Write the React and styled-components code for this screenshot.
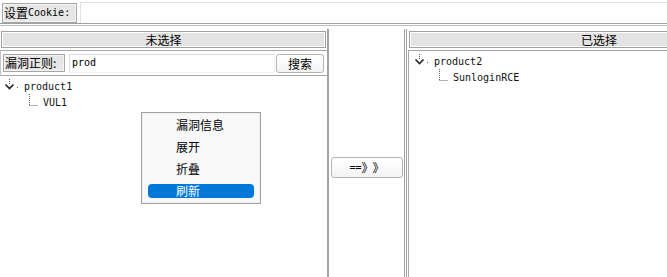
import React from 'react';
import styled, { createGlobalStyle } from 'styled-components';

const GlobalStyle = createGlobalStyle`
  html, body {
    margin: 0;
    padding: 0;
    background: #fff;
  }
  body {
    font-family: "DejaVu Sans Mono", "Noto Sans CJK SC", monospace;
    font-size: 10px;
    color: #000;
  }
`;

const Window = styled.div`
  position: relative;
  width: 667px;
  height: 277px;
  overflow: hidden;
  display: flex;
  flex-direction: column;
  background: #fff;
`;

const Cjk = styled.span`
  font-family: "Noto Sans CJK SC", sans-serif;
  font-size: 12px;
  letter-spacing: ${(p) => p.$spacing || 0}px;
`;

const TopBar = styled.div`
  display: flex;
  align-items: flex-start;
  height: 23px;
  padding-left: 2px;
`;

const FieldLabel = styled.div`
  box-sizing: border-box;
  display: flex;
  align-items: center;
  height: ${(p) => p.$h || 20}px;
  width: ${(p) => p.$w}px;
  margin-top: ${(p) => p.$top || 0}px;
  padding-left: 1px;
  background: #e6e6e6;
  border: 1px solid #a6a6a6;
  box-shadow: inset 0 0 0 1px #f4f4f4;
  white-space: nowrap;
  line-height: 16px;
`;

const CookieInput = styled.div`
  flex: 1;
  height: 21px;
  margin: 2px 0 0 3px;
  border-top: 1px solid #e2e2e2;
  border-left: 1px solid #e2e2e2;
  background: #fff;
`;

const Separator = styled.div`
  height: 1px;
  border-top: 1px solid #a0a0a0;
  border-bottom: 1px solid #bdbdbd;
`;

const Main = styled.div`
  display: flex;
  flex: 1;
  min-height: 0;
  padding-top: 3px;
`;

const SidePanel = styled.div`
  flex: 0 0 ${(p) => p.$w}px;
  display: flex;
  flex-direction: column;
  box-sizing: border-box;
  border-right: ${(p) => (p.$edge ? '2px solid #a3a3a3' : 'none')};
`;

const MiddlePanel = styled.div`
  flex: 0 0 78px;
  box-sizing: border-box;
  display: flex;
  align-items: center;
  justify-content: center;
  padding: 28px 0 0 1px;
  border-right: 3px double #a0a0a0;
  margin-right: 1px;
`;

const PanelHeader = styled.div`
  height: 15px;
  margin: 2px 1px 0;
  border: 1px solid #a0a0a0;
  box-shadow: inset 0 0 0 1px #fff;
  background: #e3e3e3;
  text-align: center;
  line-height: 15px;
  font-family: "Noto Sans CJK SC", sans-serif;
  font-size: 12px;
`;

const SearchRow = styled.div`
  display: flex;
  align-items: center;
  height: 24px;
  margin-top: 2px;
  padding: 0 3px 0 2px;
  border-top: 1px solid #a8a8a8;
  border-bottom: 1px solid #a8a8a8;
  border-left: 1px solid #c4c4c4;
`;

const SearchInput = styled.div`
  flex: 1;
  height: 17px;
  margin: 0 1px 0 4px;
  padding-left: 2px;
  border: 1px solid #d9d9d9;
  border-right-color: #f0f0f0;
  border-bottom-color: #f0f0f0;
  background: #fff;
  line-height: 16px;
  font-size: 10px;
`;

const Button = styled.div`
  box-sizing: border-box;
  width: ${(p) => p.$w}px;
  height: ${(p) => p.$h}px;
  display: flex;
  align-items: center;
  justify-content: center;
  padding-left: ${(p) => p.$shift || 0}px;
  border: 1px solid #b4b4b4;
  border-radius: 3px;
  background: linear-gradient(#ffffff, #f3f3f3);
  white-space: nowrap;
`;

const Tree = styled.div`
  flex: 1;
  padding: ${(p) => p.$pt || 1}px 0 0 ${(p) => p.$pl || 4}px;
  border-top: ${(p) => (p.$bordered ? '1px solid #a8a8a8' : 'none')};
  border-left: ${(p) => (p.$bordered ? '1px solid #a8a8a8' : 'none')};
  margin-top: ${(p) => (p.$bordered ? 2 : 0)}px;
`;

const TreeRow = styled.div`
  display: flex;
  align-items: center;
  height: 16px;
  padding-left: ${(p) => p.$indent || 0}px;
  white-space: nowrap;
`;

const NodeText = styled.span`
  margin-left: ${(p) => p.$gap || 0}px;
  font-size: 10px;
  color: #111;
`;

const Menu = styled.div`
  position: absolute;
  left: 141px;
  top: 112px;
  width: 118px;
  display: flex;
  flex-direction: column;
  padding: 1px 0;
  background: #f8f8f8;
  border: 1px solid #a0a0a0;
  box-shadow: inset 0 0 0 1px #f0f0f0;
`;

const MenuItem = styled.div`
  height: 14px;
  margin: 4px 6px;
  padding-left: 28px;
  line-height: 14px;
  border-radius: 4px;
  font-family: "Noto Sans CJK SC", sans-serif;
  font-size: 12px;
  color: ${(p) => (p.$active ? '#fff' : '#000')};
  background: ${(p) => (p.$active ? '#0078d7' : 'transparent')};
`;

const Expander = () => (
  <svg width="20" height="14" viewBox="0 0 20 14">
    <line x1="5.5" y1="0" x2="5.5" y2="5" stroke="#555" strokeWidth="1" strokeDasharray="1 1" />
    <polyline points="1.5,5.5 5.5,9.5 9.5,5.5" fill="none" stroke="#222" strokeWidth="1.6" />
    <rect x="13" y="8" width="1" height="1" fill="#666" />
  </svg>
);

const Connector = () => (
  <svg width="12" height="16" viewBox="0 0 12 16">
    <line x1="1.5" y1="0" x2="1.5" y2="11" stroke="#666" strokeWidth="1" strokeDasharray="1 1" />
    <line x1="1.5" y1="11.5" x2="10" y2="11.5" stroke="#666" strokeWidth="1" strokeDasharray="1 1" />
  </svg>
);

const menuItems = ['漏洞信息', '展开', '折叠', '刷新'];

const App = () => {
  return (
    <>
      <GlobalStyle />
      <Window>
        <TopBar>
          <FieldLabel $w={75} $top={3}>
            <Cjk>设置</Cjk>Cookie:
          </FieldLabel>
          <CookieInput />
        </TopBar>
        <Separator />

        <Main>
          <SidePanel $w={329} $edge>
            <PanelHeader>未选择</PanelHeader>
            <SearchRow>
              <FieldLabel $w={62} $h={18}>
                <Cjk>漏洞正则:</Cjk>
              </FieldLabel>
              <SearchInput>prod</SearchInput>
              <Button $w={48} $h={19}>
                <Cjk>搜索</Cjk>
              </Button>
            </SearchRow>
            <Tree $pt={2} $pl={4}>
              <TreeRow>
                <Expander />
                <NodeText>product1</NodeText>
              </TreeRow>
              <TreeRow $indent={24}>
                <Connector />
                <NodeText $gap={3}>VUL1</NodeText>
              </TreeRow>
            </Tree>
          </SidePanel>

          <MiddlePanel>
            <Button $w={72} $h={21} $shift={5}>
              ==<Cjk $spacing={5}>》》</Cjk>
            </Button>
          </MiddlePanel>

          <SidePanel $w={382}>
            <PanelHeader>已选择</PanelHeader>
            <Tree $bordered $pt={2} $pl={5}>
              <TreeRow>
                <Expander />
                <NodeText>product2</NodeText>
              </TreeRow>
              <TreeRow $indent={24}>
                <Connector />
                <NodeText $gap={3}>SunloginRCE</NodeText>
              </TreeRow>
            </Tree>
          </SidePanel>
        </Main>

        <Menu>
          {menuItems.map((label, i) => (
            <MenuItem key={label} $active={i === menuItems.length - 1}>
              {label}
            </MenuItem>
          ))}
        </Menu>
      </Window>
    </>
  );
};

export default App;
